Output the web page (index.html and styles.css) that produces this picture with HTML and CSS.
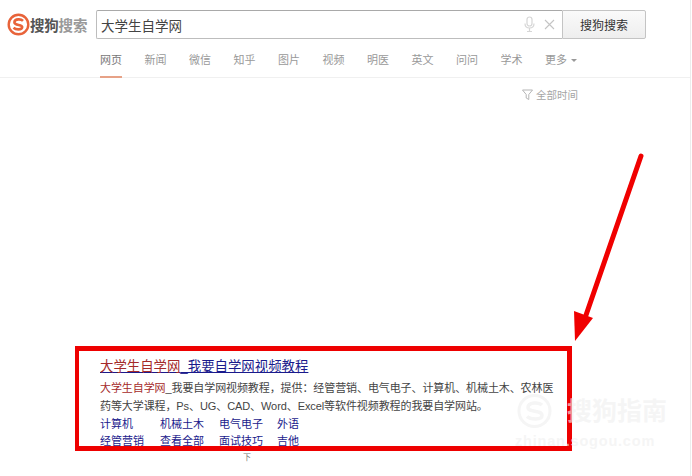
FILE: index.html
```html
<!DOCTYPE html>
<html lang="zh-CN">
<head>
  <meta charset="UTF-8">
  <title>大学生自学网 - 搜狗搜索</title>
  <link rel="stylesheet" href="styles.css">
</head>
<body>
  <div class="page">
    <header class="top">
      <div class="logo">
        <svg class="logo-mark" width="23" height="23" viewBox="0 0 23 23">
          <circle cx="11.5" cy="11.5" r="9.8" fill="#fff" stroke="#e8633a" stroke-width="2.4"/>
          <path d="M16 7.800c-1-1-2.800-1.500-4.600-1.400-2.300.1-4 1.100-4 2.900 0 3.700 7.800 1.900 7.800 4.800 0 1.500-2 2.300-3.900 2.300-1.900 0-3.600-.6-4.800-1.700" fill="none" stroke="#e8633a" stroke-width="2.600"/>
        </svg>
        <span class="logo-dark">搜狗</span><span class="logo-light">搜索</span>
      </div>
      <form class="search">
        <div class="search-input">
          <span class="query">大学生自学网</span>
          <svg class="mic" width="11" height="17" viewBox="0 0 11 17">
            <rect x="3" y="1" width="5" height="9" rx="2.500" fill="none" stroke="#d6d6d6" stroke-width="1.200"/>
            <path d="M1 7.500c0 6 9 6 9 0M5.500 12.500v3M3 15.500h5" fill="none" stroke="#d6d6d6" stroke-width="1.200"/>
          </svg>
          <svg class="clear" width="11" height="11" viewBox="0 0 11 11">
            <path d="M1 1l9 9M10 1l-9 9" stroke="#c4c4c4" stroke-width="1.100"/>
          </svg>
        </div>
        <button type="button" class="search-btn">搜狗搜索</button>
      </form>
    </header>

    <nav class="tabs">
      <a class="tab active">网页</a>
      <a class="tab">新闻</a>
      <a class="tab">微信</a>
      <a class="tab">知乎</a>
      <a class="tab">图片</a>
      <a class="tab">视频</a>
      <a class="tab">明医</a>
      <a class="tab">英文</a>
      <a class="tab">问问</a>
      <a class="tab">学术</a>
      <a class="tab">更多<i class="caret"></i></a>
    </nav>

    <div class="filter">
      <svg width="11" height="12" viewBox="0 0 11 12">
        <path d="M.5 1h10L6.800 5.500v5L4.200 9V5.500z" fill="none" stroke="#b5b5b5"/>
      </svg>
      <span>全部时间</span>
    </div>

    <section class="result">
      <a class="result-title"><span class="hit">大学生自学网</span>_我要自学网视频教程</a>
      <p class="result-text"><span class="hit">大学生自学网</span>_我要自学网视频教程，提供：经管营销、电气电子、计算机、机械土木、农林医药等大学课程，Ps、UG、CAD、Word、Excel等软件视频教程的我要自学网站。</p>
      <div class="links">
        <a>计算机</a>
        <a>机械土木</a>
        <a>电气电子</a>
        <a>外语</a>
        <a>经管营销</a>
        <a>查看全部</a>
        <a>面试技巧</a>
        <a>吉他</a>
      </div>
    </section>
    <div class="cursor-mark">下</div>

    <svg class="arrow" width="80" height="200" viewBox="0 0 80 200">
      <path d="M71 6L15 168" stroke="#f00000" stroke-width="5" stroke-linecap="round" fill="none"/>
      <path d="M4 161L23 168 5 191z" fill="#f00000"/>
    </svg>

    <div class="watermark">
      <div class="wm-row">
        <svg width="39" height="34" viewBox="0 0 39 34">
          <circle cx="19.500" cy="17" r="15.500" fill="none" stroke="#f5f5f5" stroke-width="3"/>
          <path d="M27 11c-3-3-14-3-14 2.500 0 5.500 14 2 14 8 0 4.500-11 4.500-15 1" fill="none" stroke="#f5f5f5" stroke-width="3.500"/>
        </svg>
        <span class="wm-name">搜狗指南</span>
      </div>
      <div class="wm-url">zhinan.sogou.com</div>
    </div>
  </div>
</body>
</html>
```

FILE: styles.css
```css
/* General */
html, body {
  margin: 0;
  padding: 0;
  height: 100%;
  overflow: hidden;
  background: #fff;
}

.page {
  position: relative;
  width: 690px;
  height: 476px;
  border-right: 1px solid #ececec;
  font-family: "Liberation Sans", "Noto Sans CJK SC", sans-serif;
  color: #333;
}

/* Header */
.top {
  display: flex;
  align-items: center;
  box-sizing: border-box;
  height: 39px;
  padding: 10px 0 0 7px;
}

.logo {
  display: flex;
  align-items: center;
  width: 89px;
  font-size: 14.500px;
  font-weight: bold;
  letter-spacing: -.2px;
}

.logo-mark {
  flex: none;
}

.logo-dark {
  color: #555;
}

.logo-light {
  color: #999;
}

.search {
  display: flex;
}

.search-input {
  display: flex;
  align-items: center;
  box-sizing: border-box;
  width: 466px;
  height: 29px;
  padding: 0 7px 0 4px;
  border: 1px solid #bdbdbd;
  border-top-color: #a9a9a9;
  border-right: 0;
  border-radius: 2px 0 0 2px;
}

.query {
  flex: 1;
  font-size: 13.500px;
  color: #444;
}

.mic {
  margin-right: 9px;
}

.search-btn {
  box-sizing: border-box;
  width: 84px;
  height: 29px;
  padding: 0;
  border: 1px solid #c4c4c4;
  border-radius: 0 2px 2px 0;
  background: linear-gradient(#fafafa, #eeeeee);
  font: 12px "Liberation Sans", "Noto Sans CJK SC", sans-serif;
  color: #333;
}

/* Tabs */
.tabs {
  display: flex;
  gap: 22.500px;
  box-sizing: border-box;
  height: 39px;
  padding-left: 100px;
  border-bottom: 1px solid #f0f0f0;
}

.tab {
  box-sizing: border-box;
  height: 39px;
  width: 22px;
  padding-top: 14px;
  font-size: 11px;
  line-height: 15px;
  white-space: nowrap;
  color: #999;
}

.tab.active {
  color: #777;
  border-bottom: 2px solid #e7a287;
}

.caret {
  display: inline-block;
  margin: 0 0 2px 4px;
  border: 3px solid transparent;
  border-top: 3px solid #999;
  border-bottom: 0;
}

/* Filter */
.filter {
  display: flex;
  align-items: center;
  justify-content: flex-end;
  gap: 3px;
  height: 15px;
  margin-top: 9px;
  padding-right: 112px;
  font-size: 10.500px;
  color: #a5a5a5;
}

/* Result */
.result {
  box-sizing: border-box;
  width: 497px;
  height: 105px;
  margin: 244px 0 0 75px;
  padding: 7px 5px 0 21px;
  border: 5px solid #ee0000;
  border-left-width: 4px;
}

.result-title {
  display: block;
  font-size: 13.400px;
  line-height: 18px;
  color: #1a1a8c;
  text-decoration: underline;
}

.result-title .hit {
  color: #a52a2a;
}

.result-text {
  margin: 4px 0 0;
  font-size: 11px;
  line-height: 17.500px;
  letter-spacing: -.09px;
  color: #444;
}

.hit {
  color: #a52a2a;
}

.links {
  display: grid;
  grid-template-columns: 60px 59px 58px 40px;
  margin-top: 1px;
  font-size: 11px;
  line-height: 17px;
  color: #1a1a8c;
}

.cursor-mark {
  margin: 2px 0 0 243px;
  font-size: 8px;
  line-height: 10px;
  color: #777;
}

/* Overlays */
.arrow {
  position: absolute;
  left: 570px;
  top: 150px;
}

.watermark {
  position: absolute;
  left: 515px;
  top: 394px;
  color: rgba(240, 240, 240, .65);
}

.wm-row {
  display: flex;
  align-items: center;
  gap: 13px;
}

.wm-name {
  font-size: 25px;
  font-weight: bold;
  line-height: 34px;
  white-space: nowrap;
}

.wm-url {
  margin-top: 6px;
  font-size: 14.500px;
  font-weight: bold;
  line-height: 15px;
  letter-spacing: .8px;
  white-space: nowrap;
}
```
